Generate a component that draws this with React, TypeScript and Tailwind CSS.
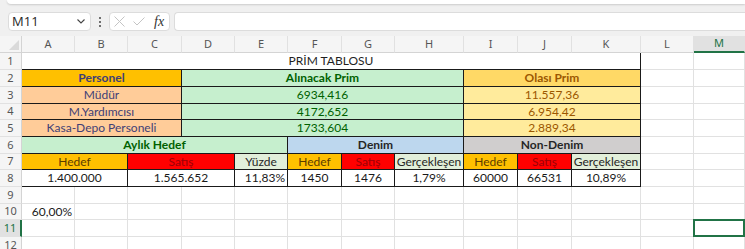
import React from "react";

const rowStarts = [
  "row-start-2",
  "row-start-3",
  "row-start-4",
  "row-start-5",
  "row-start-6",
  "row-start-7",
  "row-start-8",
  "row-start-9",
  "row-start-10",
  "row-start-11",
  "row-start-12",
  "row-start-13",
];
const colStarts = [
  "col-start-2",
  "col-start-3",
  "col-start-4",
  "col-start-5",
  "col-start-6",
  "col-start-7",
  "col-start-8",
  "col-start-9",
  "col-start-10",
  "col-start-11",
  "col-start-12",
  "col-start-13",
  "col-start-14",
];
const letters = ["A", "B", "C", "D", "E", "F", "G", "H", "I", "J", "K", "L", "M"];

type Cell = { pos: string; text: string; cls: string };

const B = "border-r border-b border-[#1a1a1a]";
const C = "justify-center";

const cells: Cell[] = [
  { pos: "col-start-2 col-span-11 row-start-2", text: "PRİM TABLOSU", cls: `bg-white text-[#1f1f1f] ${B} ${C}` },
  { pos: "col-start-2 col-span-3 row-start-3", text: "Personel", cls: `bg-[#ffc000] text-[#3f3f76] font-bold ${B} ${C}` },
  { pos: "col-start-5 col-span-5 row-start-3", text: "Alınacak Prim", cls: `bg-[#c6efce] text-[#006100] font-bold ${B} ${C}` },
  { pos: "col-start-10 col-span-3 row-start-3", text: "Olası Prim", cls: `bg-[#ffd966] text-[#9c5700] font-bold ${B} ${C}` },
  { pos: "col-start-2 col-span-3 row-start-4", text: "Müdür", cls: `bg-[#ffcc99] text-[#3f3f76] ${B} ${C}` },
  { pos: "col-start-5 col-span-5 row-start-4", text: "6934,416", cls: `bg-[#c6efce] text-[#006100] ${B} ${C}` },
  { pos: "col-start-10 col-span-3 row-start-4", text: "11.557,36", cls: `bg-[#ffeb9c] text-[#9c5700] ${B} ${C}` },
  { pos: "col-start-2 col-span-3 row-start-5", text: "M.Yardımcısı", cls: `bg-[#ffcc99] text-[#3f3f76] ${B} ${C}` },
  { pos: "col-start-5 col-span-5 row-start-5", text: "4172,652", cls: `bg-[#c6efce] text-[#006100] ${B} ${C}` },
  { pos: "col-start-10 col-span-3 row-start-5", text: "6.954,42", cls: `bg-[#ffeb9c] text-[#9c5700] ${B} ${C}` },
  { pos: "col-start-2 col-span-3 row-start-6", text: "Kasa-Depo Personeli", cls: `bg-[#ffcc99] text-[#3f3f76] ${B} ${C}` },
  { pos: "col-start-5 col-span-5 row-start-6", text: "1733,604", cls: `bg-[#c6efce] text-[#006100] ${B} ${C}` },
  { pos: "col-start-10 col-span-3 row-start-6", text: "2.889,34", cls: `bg-[#ffeb9c] text-[#9c5700] ${B} ${C}` },
  { pos: "col-start-2 col-span-5 row-start-7", text: "Aylık Hedef", cls: `bg-[#c6efce] text-[#006100] font-bold ${B} ${C}` },
  { pos: "col-start-7 col-span-3 row-start-7", text: "Denim", cls: `bg-[#bdd7ee] text-[#262626] font-bold ${B} ${C}` },
  { pos: "col-start-10 col-span-3 row-start-7", text: "Non-Denim", cls: `bg-[#d0cece] text-[#262626] font-bold ${B} ${C}` },
  { pos: "col-start-2 col-span-2 row-start-8", text: "Hedef", cls: `bg-[#ffc000] text-[#5c3d00] ${B} ${C}` },
  { pos: "col-start-4 col-span-2 row-start-8", text: "Satış", cls: `bg-[#ff0000] text-[#9c0006] ${B} ${C}` },
  { pos: "col-start-6 row-start-8", text: "Yüzde", cls: `bg-[#e2efda] text-[#262626] ${B} ${C}` },
  { pos: "col-start-7 row-start-8", text: "Hedef", cls: `bg-[#ffc000] text-[#5c3d00] ${B} ${C}` },
  { pos: "col-start-8 row-start-8", text: "Satış", cls: `bg-[#ff0000] text-[#9c0006] ${B} ${C}` },
  { pos: "col-start-9 row-start-8", text: "Gerçekleşen", cls: `bg-[#e2efda] text-[#262626] ${B} ${C}` },
  { pos: "col-start-10 row-start-8", text: "Hedef", cls: `bg-[#ffc000] text-[#5c3d00] ${B} ${C}` },
  { pos: "col-start-11 row-start-8", text: "Satış", cls: `bg-[#ff0000] text-[#9c0006] ${B} ${C}` },
  { pos: "col-start-12 row-start-8", text: "Gerçekleşen", cls: `bg-[#e2efda] text-[#262626] ${B} ${C}` },
  { pos: "col-start-2 col-span-2 row-start-9", text: "1.400.000", cls: `bg-white text-[#1a1a1a] ${B} ${C}` },
  { pos: "col-start-4 col-span-2 row-start-9", text: "1.565.652", cls: `bg-white text-[#1a1a1a] ${B} ${C}` },
  { pos: "col-start-6 row-start-9", text: "11,83%", cls: `bg-white text-[#1a1a1a] ${B} justify-end pr-[2px]` },
  { pos: "col-start-7 row-start-9", text: "1450", cls: `bg-white text-[#1a1a1a] ${B} ${C}` },
  { pos: "col-start-8 row-start-9", text: "1476", cls: `bg-white text-[#1a1a1a] ${B} ${C}` },
  { pos: "col-start-9 row-start-9", text: "1,79%", cls: `bg-white text-[#1a1a1a] ${B} ${C}` },
  { pos: "col-start-10 row-start-9", text: "60000", cls: `bg-white text-[#1a1a1a] ${B} ${C}` },
  { pos: "col-start-11 row-start-9", text: "66531", cls: `bg-white text-[#1a1a1a] ${B} ${C}` },
  { pos: "col-start-12 row-start-9", text: "10,89%", cls: `bg-white text-[#1a1a1a] ${B} ${C}` },
  { pos: "col-start-2 row-start-11", text: "60,00%", cls: `text-[#1a1a1a] justify-end pr-[3px]` },
];

export default function App() {
  return (
    <div className="w-[745px] h-[249px] overflow-hidden bg-[#f0f0f0] font-['Open_Sans',sans-serif]">
      {/* Formula bar */}
      <div className="h-[36px]">
        <div className="ml-[7px] h-[4px] bg-white rounded-bl-[6px] shadow-[0_1px_2px_rgba(0,0,0,0.15)]" />
        <div className="flex items-center mt-[8px] h-[19px]">
          <div className="ml-[8px] w-[83px] h-[19px] bg-white rounded-[4px] border border-[#dcdcdc] flex items-center justify-between pl-[3px] pr-[5px]">
            <span className="text-[13px] text-[#262626] leading-none">M11</span>
            <svg width="8" height="5" viewBox="0 0 8 5" fill="none">
              <path d="M0.5 0.5 L4 4 L7.5 0.5" stroke="#444" strokeWidth="1.1" />
            </svg>
          </div>
          <div className="w-[18px] flex flex-col items-center justify-center gap-[2px]">
            <span className="w-[2px] h-[2px] bg-[#444] rounded-full" />
            <span className="w-[2px] h-[2px] bg-[#444] rounded-full" />
            <span className="w-[2px] h-[2px] bg-[#444] rounded-full" />
          </div>
          <div className="w-[61px] h-[19px] bg-white rounded-[4px] border border-[#dcdcdc] flex items-center pl-[4px]">
            <svg width="11" height="11" viewBox="0 0 11 11" fill="none">
              <path d="M0.5 0.5 L10.5 10.5 M10.5 0.5 L0.5 10.5" stroke="#c4c4c4" strokeWidth="1" />
            </svg>
            <svg width="12" height="9" viewBox="0 0 12 9" fill="none" className="ml-[8px]">
              <path d="M0.5 4.5 L4 8 L11.5 0.5" stroke="#c4c4c4" strokeWidth="1" />
            </svg>
            <span className="ml-[9px] text-[14px] italic text-[#333] font-['Liberation_Serif',serif] leading-none">
              fx
            </span>
          </div>
          <div className="ml-[4px] flex-1 h-[19px] bg-white rounded-l-[4px] border border-r-0 border-[#dcdcdc]" />
        </div>
      </div>

      {/* Sheet */}
      <div className="grid grid-cols-[22px_53px_53px_54px_53px_53px_54px_53px_69px_54px_54px_69px_53px_51px] grid-rows-[17px_17px_17px_17px_16px_17px_17px_16px_17px_17px_16px_17px_17px] bg-white font-['Lato',sans-serif] text-[12px]">
        {/* corner */}
        <div className="col-start-1 row-start-1 bg-[#f5f5f5] border-r border-b border-[#d4d4d4] flex items-end justify-end p-[2px]">
          <div className="w-0 h-0 border-l-[10px] border-l-transparent border-b-[10px] border-b-[#dadada]" />
        </div>
        {/* column headers */}
        {letters.map((l, i) => (
          <div
            key={"h" + l}
            className={`${colStarts[i]} row-start-1 flex items-center justify-center text-[11px] font-['Noto_Sans',sans-serif] border-r border-[#e1e1e1] ${
              l === "M"
                ? "bg-[#e1e1e1] text-[#217346] border-b-2 border-b-[#217346]"
                : "bg-[#f5f5f5] text-[#555] border-b border-b-[#d4d4d4]"
            }`}
          >
            {l}
          </div>
        ))}
        {/* row headers */}
        {rowStarts.map((r, i) => (
          <div
            key={"r" + i}
            className={`col-start-1 ${r} flex items-center justify-center text-[11px] font-['Noto_Sans',sans-serif] border-b border-[#e1e1e1] ${
              i === 10
                ? "bg-[#e1e1e1] text-[#217346] border-r-2 border-r-[#217346]"
                : "bg-[#f5f5f5] text-[#555] border-r border-r-[#d4d4d4]"
            }`}
          >
            {i + 1}
          </div>
        ))}
        {/* gridlines */}
        {rowStarts.map((r, ri) =>
          colStarts.map((c, ci) => (
            <div key={"g" + ri + "-" + ci} className={`${r} ${c} border-r border-b border-[#e1e1e1]`} />
          ))
        )}
        {/* data */}
        {cells.map((cell, i) => (
          <div key={"d" + i} className={`${cell.pos} ${cell.cls} flex items-center leading-none whitespace-nowrap overflow-hidden`}>
            {cell.text}
          </div>
        ))}
        {/* selection */}
        <div className="col-start-14 row-start-12 border-2 border-[#217346] -ml-[1px] -mt-[1px]" />
      </div>
    </div>
  );
}
